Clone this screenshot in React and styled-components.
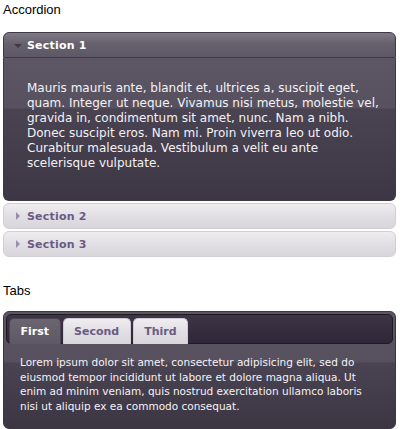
import styled, { createGlobalStyle } from "styled-components";

const Global = createGlobalStyle`
  body {
    margin: 0;
    background: #ffffff;
    font-family: "DejaVu Sans", Verdana, sans-serif;
  }
`;

const Page = styled.div`
  padding: 2px 5px 0 3px;
  width: 393px;
`;

const Title = styled.div`
  font-family: "Liberation Sans", Arial, sans-serif;
  font-size: 13px;
  line-height: 15px;
  color: #000;
  margin: ${(p) => (p.$first ? "0" : "26px")} 0 ${(p) => (p.$first ? "15px" : "13px")};
`;

const Accordion = styled.div`
  display: flex;
  flex-direction: column;
  gap: 2px;
`;

const Header = styled.div`
  display: flex;
  align-items: center;
  height: 24px;
  padding-left: 23px;
  position: relative;
  border: 1px solid ${(p) => (p.$active ? "#3f3a46" : "#d2ced5")};
  border-radius: ${(p) => (p.$active ? "6px 6px 0 0" : "6px")};
  background: ${(p) =>
    p.$active
      ? "linear-gradient(#7d7985, #66616d 45%, #5d5865)"
      : "linear-gradient(#efedf0, #e2dfe4 50%, #d8d5db)"};
  color: ${(p) => (p.$active ? "#ffffff" : "#6a5b82")};
  font-size: 11px;
  font-weight: bold;
  letter-spacing: 0.2px;
`;

const Arrow = styled.span`
  position: absolute;
  left: ${(p) => (p.$open ? "10px" : "12px")};
  top: ${(p) => (p.$open ? "11px" : "8px")};
  width: 0;
  height: 0;
  ${(p) =>
    p.$open
      ? "border-left: 4px solid transparent; border-right: 4px solid transparent; border-top: 4px solid #3e3945;"
      : "border-top: 4px solid transparent; border-bottom: 4px solid transparent; border-left: 4px solid #9a8eae;"}
`;

const Content = styled.div`
  box-sizing: border-box;
  margin-top: -2px;
  border: 1px solid #3f3a46;
  border-top: 0;
  border-radius: 0 0 6px 6px;
  padding: 23px 11px 0 23px;
  height: 143px;
  color: #f4f2f6;
  font-size: 12px;
  line-height: 15px;
  background: linear-gradient(#5d5765, #57515f 50px, #4a4352 51px, #3d3645);
`;

const TabsBox = styled.div`
  border: 1px solid #3c3742;
  border-radius: 6px;
  padding: 2px;
  background: linear-gradient(#5c5664 0, #57515f 50px, #4a4352 51px, #3c3643);
`;

const Nav = styled.div`
  display: flex;
  gap: 2px;
  padding: 3px 2px 0;
  height: 25px;
  border: 1px solid #1f1a24;
  border-radius: 5px;
  background: linear-gradient(#3d3546, #2f2738);
`;

const Tab = styled.div`
  display: flex;
  align-items: center;
  height: 25px;
  padding: 0 10.5px;
  margin-bottom: -1px;
  border: 1px solid ${(p) => (p.$active ? "#4a4552" : "#cfcbd3")};
  border-bottom: 0;
  border-radius: 5px 5px 0 0;
  font-size: 11px;
  font-weight: bold;
  color: ${(p) => (p.$active ? "#ffffff" : "#6a5b82")};
  background: ${(p) =>
    p.$active
      ? "linear-gradient(#6a6571, #5d5865)"
      : "linear-gradient(#efedf0, #e2dfe4 50%, #d8d5db)"};
`;

const Panel = styled.div`
  padding: 11px 12px 13px 14px;
  color: #f4f2f6;
  font-size: 10.5px;
  line-height: 14.5px;
`;

export default function App() {
  return (
    <Page>
      <Global />
      <Title $first>Accordion</Title>
      <Accordion>
        <Header $active>
          <Arrow $open />
          Section 1
        </Header>
        <Content>
          Mauris mauris ante, blandit et, ultrices a, suscipit eget, quam.
          Integer ut neque. Vivamus nisi metus, molestie vel, gravida in,
          condimentum sit amet, nunc. Nam a nibh. Donec suscipit eros. Nam mi.
          Proin viverra leo ut odio. Curabitur malesuada. Vestibulum a velit eu
          ante scelerisque vulputate.
        </Content>
        <Header>
          <Arrow />
          Section 2
        </Header>
        <Header>
          <Arrow />
          Section 3
        </Header>
      </Accordion>
      <Title>Tabs</Title>
      <TabsBox>
        <Nav>
          <Tab $active>First</Tab>
          <Tab>Second</Tab>
          <Tab>Third</Tab>
        </Nav>
        <Panel>
          Lorem ipsum dolor sit amet, consectetur adipisicing elit, sed do
          eiusmod tempor incididunt ut labore et dolore magna aliqua. Ut enim
          ad minim veniam, quis nostrud exercitation ullamco laboris nisi ut
          aliquip ex ea commodo consequat.
        </Panel>
      </TabsBox>
    </Page>
  );
}
